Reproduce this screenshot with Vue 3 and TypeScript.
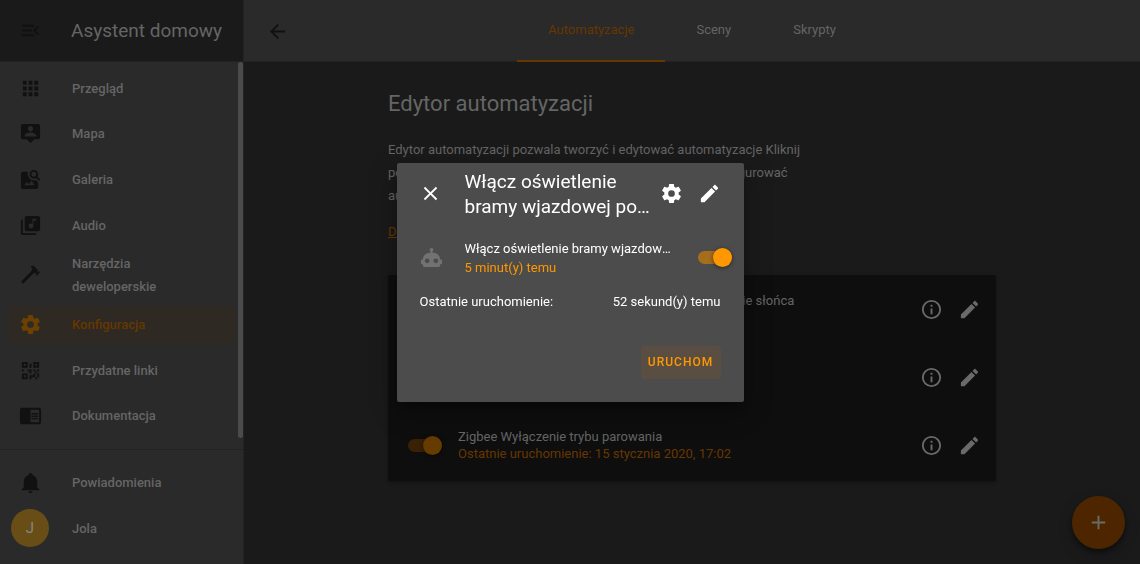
<script setup lang="ts">
interface NavItem {
  label: string
  icon: string
  active?: boolean
}
interface Automation {
  id: string
  name: string
  last: string
}

const icons = {
  menuOpen: 'M21,15.61L19.59,17L14.58,12L19.59,7L21,8.39L17.44,12L21,15.61M3,6H16V8H3V6M3,13V11H13V13H3M3,18V16H16V18H3Z',
  apps: 'M16,20H20V16H16M16,14H20V10H16M10,8H14V4H10M16,8H20V4H16M10,14H14V10H10M4,14H8V10H4M4,20H8V16H4M10,20H14V16H10M4,8H8V4H4V8Z',
  tooltipAccount: 'M20,2H4A2,2 0 0,0 2,4V16A2,2 0 0,0 4,18H8L12,22L16,18H20A2,2 0 0,0 22,16V4A2,2 0 0,0 20,2M12,4.3C13.5,4.3 14.7,5.5 14.7,7C14.7,8.5 13.5,9.7 12,9.7C10.5,9.7 9.3,8.5 9.3,7C9.3,5.5 10.5,4.3 12,4.3M18,15H6V14.1C6,12.1 10,11 12,11C14,11 18,12.1 18,14.1V15Z',
  imageSearch: 'M15.5,9C16.2,9 16.79,8.76 17.27,8.27C17.76,7.79 18,7.2 18,6.5C18,5.83 17.76,5.23 17.27,4.73C16.79,4.23 16.2,4 15.5,4C14.83,4 14.23,4.23 13.73,4.73C13.23,5.23 13,5.83 13,6.5C13,7.2 13.23,7.79 13.73,8.27C14.23,8.76 14.83,9 15.5,9M19.31,8.91L22.41,12L21,13.41L17.86,10.31C17.08,10.78 16.28,11 15.47,11C14.22,11 13.16,10.58 12.3,9.7C11.45,8.83 11,7.77 11,6.5C11,5.27 11.45,4.2 12.33,3.33C13.2,2.45 14.27,2 15.5,2C16.77,2 17.83,2.45 18.7,3.33C19.58,4.2 20,5.27 20,6.5C20,7.33 19.78,8.13 19.31,8.91M16.5,18H5.5L8.25,14.5L10.22,16.83L12.94,13.31L16.5,18M18,13L20,15V20C20,20.55 19.81,21 19.41,21.4C19,21.79 18.53,22 18,22H4C3.45,22 3,21.79 2.6,21.4C2.21,21 2,20.55 2,20V6C2,5.47 2.21,5 2.6,4.59C3,4.19 3.45,4 4,4H9.5C9.2,4.64 9.03,5.31 9,6C8.94,7.86 9.61,9.46 11,10.87C12.24,12.11 13.74,12.82 15.5,13C16.36,13.05 17.19,12.9 18,12.5V13Z',
  music: 'M4,6H2V20A2,2 0 0,0 4,22H18V20H4M18,7H15V12.5A2.5,2.5 0 0,1 12.5,15A2.5,2.5 0 0,1 10,12.5A2.5,2.5 0 0,1 12.5,10C13.07,10 13.58,10.19 14,10.5V5H18M20,2H8A2,2 0 0,0 6,4V16A2,2 0 0,0 8,18H20A2,2 0 0,0 22,16V4A2,2 0 0,0 20,2Z',
  hammer: 'M2,19.63L13.43,8.2L12.72,7.5L14.14,6.07L12,3.89C13.2,2.7 15.09,2.7 16.27,3.89L19.87,7.5L18.45,8.91H21.29L22,9.62L18.45,13.21L17.74,12.5V9.62L16.27,11.04L15.56,10.33L4.13,21.76L2,19.63Z',
  cog: 'M12,15.5A3.5,3.5 0 0,1 8.5,12A3.5,3.5 0 0,1 12,8.5A3.5,3.5 0 0,1 15.5,12A3.5,3.5 0 0,1 12,15.5M19.43,12.97C19.47,12.65 19.5,12.33 19.5,12C19.5,11.67 19.47,11.34 19.43,11L21.54,9.37C21.73,9.22 21.78,8.95 21.66,8.73L19.66,5.27C19.54,5.05 19.27,4.96 19.05,5.05L16.56,6.05C16.04,5.66 15.5,5.32 14.87,5.07L14.5,2.42C14.46,2.18 14.25,2 14,2H10C9.75,2 9.54,2.18 9.5,2.42L9.13,5.07C8.5,5.32 7.96,5.66 7.44,6.05L4.95,5.05C4.73,4.96 4.46,5.05 4.34,5.27L2.34,8.73C2.21,8.95 2.27,9.22 2.46,9.37L4.57,11C4.53,11.34 4.5,11.67 4.5,12C4.5,12.33 4.53,12.65 4.57,12.97L2.46,14.63C2.27,14.78 2.21,15.05 2.34,15.27L4.34,18.73C4.46,18.95 4.73,19.03 4.95,18.95L7.44,17.94C7.96,18.34 8.5,18.68 9.13,18.93L9.5,21.58C9.54,21.82 9.75,22 10,22H14C14.25,22 14.46,21.82 14.5,21.58L14.87,18.93C15.5,18.67 16.04,18.34 16.56,17.94L19.05,18.95C19.27,19.03 19.54,18.95 19.66,18.73L21.66,15.27C21.78,15.05 21.73,14.78 21.54,14.63L19.43,12.97Z',
  qrcode: 'M3,11H5V13H3V11M11,5H13V9H11V5M9,11H13V15H11V13H9V11M15,11H17V13H19V11H21V13H19V15H21V19H19V21H17V19H13V21H11V17H15V15H17V13H15V11M19,19V15H17V19H19M15,3H21V9H15V3M17,5V7H19V5H17M3,3H9V9H3V3M5,5V7H7V5H5M3,15H9V21H3V15M5,17V19H7V17H5Z',
  reader: 'M13,12H20V13.5H13M13,9.5H20V11H13M13,14.5H20V16H13M21,4H3A2,2 0 0,0 1,6V19A2,2 0 0,0 3,21H21A2,2 0 0,0 23,19V6A2,2 0 0,0 21,4M21,19H12V6H21',
  bell: 'M21,19V20H3V19L5,17V11C5,7.9 7.03,5.17 10,4.29C10,4.19 10,4.1 10,4A2,2 0 0,1 12,2A2,2 0 0,1 14,4C14,4.1 14,4.19 14,4.29C16.97,5.17 19,7.9 19,11V17L21,19M14,21A2,2 0 0,1 12,23A2,2 0 0,1 10,21',
  arrowLeft: 'M20,11V13H8L13.5,18.5L12.08,19.92L4.16,12L12.08,4.08L13.5,5.5L8,11H20Z',
  info: 'M11,9H13V7H11M12,20C7.59,20 4,16.41 4,12C4,7.59 7.59,4 12,4C16.41,4 20,7.59 20,12C20,16.41 16.41,20 12,20M12,2A10,10 0 0,0 2,12A10,10 0 0,0 12,22A10,10 0 0,0 22,12A10,10 0 0,0 12,2M11,17H13V11H11V17Z',
  pencil: 'M20.71,7.04C21.1,6.65 21.1,6 20.71,5.63L18.37,3.29C18,2.9 17.35,2.9 16.96,3.29L15.12,5.12L18.87,8.87M3,17.25V21H6.75L17.81,9.93L14.06,6.18L3,17.25Z',
  close: 'M19,6.41L17.59,5L12,10.59L6.41,5L5,6.41L10.59,12L5,17.59L6.41,19L12,13.41L17.59,19L19,17.59L13.41,12L19,6.41Z',
  plus: 'M19,13H13V19H11V13H5V11H11V5H13V11H19V13Z',
  robot: 'M12,2A2,2 0 0,1 14,4C14,4.74 13.6,5.39 13,5.73V7H14A7,7 0 0,1 21,14H22A1,1 0 0,1 23,15V18A1,1 0 0,1 22,19H21V20A2,2 0 0,1 19,22H5A2,2 0 0,1 3,20V19H2A1,1 0 0,1 1,18V15A1,1 0 0,1 2,14H3A7,7 0 0,1 10,7H11V5.73C10.4,5.39 10,4.74 10,4A2,2 0 0,1 12,2M7.5,13A2.5,2.5 0 0,0 5,15.5A2.5,2.5 0 0,0 7.5,18A2.5,2.5 0 0,0 10,15.5A2.5,2.5 0 0,0 7.5,13M16.5,13A2.5,2.5 0 0,0 14,15.5A2.5,2.5 0 0,0 16.5,18A2.5,2.5 0 0,0 19,15.5A2.5,2.5 0 0,0 16.5,13Z',
}

const navItems: NavItem[] = [
  { label: 'Przegląd', icon: icons.apps },
  { label: 'Mapa', icon: icons.tooltipAccount },
  { label: 'Galeria', icon: icons.imageSearch },
  { label: 'Audio', icon: icons.music },
  { label: 'Narzędzia deweloperskie', icon: icons.hammer },
  { label: 'Konfiguracja', icon: icons.cog, active: true },
  { label: 'Przydatne linki', icon: icons.qrcode },
  { label: 'Dokumentacja', icon: icons.reader },
]

const tabs = ['Automatyzacje', 'Sceny', 'Skrypty']
const dialogName = 'Włącz oświetlenie bramy wjazdowej po zachodzie słońca'

const automations: Automation[] = [
  { id: 'on', name: 'Włącza oświetlenie bramy wjazdowej po zachodzie słońca', last: 'Ostatnie uruchomienie: 52 sekund(y) temu' },
  { id: 'off', name: 'Wyłącz oświetlenie bramy wjazdowej', last: 'Ostatnie uruchomienie: nigdy' },
  { id: 'zigbee', name: 'Zigbee Wyłączenie trybu parowania', last: 'Ostatnie uruchomienie: 15 stycznia 2020, 17:02' },
]
</script>

<template>
  <div class="app">
    <aside class="sidebar">
      <header class="brand">
        <button class="icon-btn" aria-label="Zwiń menu">
          <svg class="icon" viewBox="0 0 24 24"><path :d="icons.menuOpen" /></svg>
        </button>
        <span class="brand-name">Asystent domowy</span>
      </header>
      <div class="nav-area">
        <nav class="nav">
          <a v-for="item in navItems" :key="item.label" href="#" class="nav-item" :class="{ active: item.active }">
            <svg class="icon" viewBox="0 0 24 24"><path fill-rule="evenodd" :d="item.icon" /></svg>
            <span>{{ item.label }}</span>
          </a>
        </nav>
        <div class="scroll-thumb"></div>
      </div>
      <div class="bottom">
        <a href="#" class="nav-item">
          <svg class="icon" viewBox="0 0 24 24"><path :d="icons.bell" /></svg>
          <span>Powiadomienia</span>
        </a>
        <a href="#" class="nav-item profile">
          <span class="avatar">J</span>
          <span>Jola</span>
        </a>
      </div>
    </aside>

    <main class="main">
      <header class="topbar">
        <button class="icon-btn back" aria-label="Wstecz">
          <svg class="icon" viewBox="0 0 24 24"><path :d="icons.arrowLeft" /></svg>
        </button>
        <nav class="tabs">
          <a v-for="(tab, i) in tabs" :key="tab" href="#" class="tab" :class="{ active: i === 0 }">{{ tab }}</a>
        </nav>
      </header>

      <section class="content">
        <h1>Edytor automatyzacji</h1>
        <p class="intro">
          Edytor automatyzacji pozwala tworzyć i edytować automatyzacje Kliknij
          poniższy link, aby przeczytać instrukcję, jak poprawnie skonfigurować
          automatyzacje w Home Assistant.
        </p>
        <a href="#" class="learn">Dowiedz się więcej o automatyzacji</a>
        <div class="card">
          <div v-for="a in automations" :key="a.id" class="row">
            <input :id="`auto-${a.id}`" type="checkbox" class="switch" checked />
            <label class="row-text" :for="`auto-${a.id}`">
              <span>{{ a.name }}</span>
              <span class="last">{{ a.last }}</span>
            </label>
            <button class="icon-btn" aria-label="Informacje">
              <svg class="icon" viewBox="0 0 24 24"><path :d="icons.info" /></svg>
            </button>
            <button class="icon-btn" aria-label="Edytuj">
              <svg class="icon" viewBox="0 0 24 24"><path :d="icons.pencil" /></svg>
            </button>
          </div>
        </div>
      </section>
      <button class="fab" aria-label="Dodaj automatyzację">
        <svg class="icon" viewBox="0 0 24 24"><path :d="icons.plus" /></svg>
      </button>
    </main>

    <div class="overlay">
      <section class="dialog" role="dialog" aria-modal="true" aria-labelledby="dialog-title">
        <header class="dialog-head">
          <button class="icon-btn" aria-label="Zamknij">
            <svg class="icon" viewBox="0 0 24 24"><path :d="icons.close" /></svg>
          </button>
          <h2 id="dialog-title">{{ dialogName }}</h2>
          <button class="icon-btn" aria-label="Ustawienia">
            <svg class="icon" viewBox="0 0 24 24"><path :d="icons.cog" /></svg>
          </button>
          <button class="icon-btn" aria-label="Edytuj">
            <svg class="icon" viewBox="0 0 24 24"><path :d="icons.pencil" /></svg>
          </button>
        </header>
        <div class="state">
          <svg class="icon robot" viewBox="0 0 24 24"><path :d="icons.robot" /></svg>
          <label class="state-text" for="dialog-switch">
            <span class="state-name">{{ dialogName }}</span>
            <span class="ago">5 minut(y) temu</span>
          </label>
          <input id="dialog-switch" type="checkbox" class="switch" checked />
        </div>
        <div class="attr">
          <span>Ostatnie uruchomienie:</span>
          <span>52 sekund(y) temu</span>
        </div>
        <div class="actions">
          <button class="run">Uruchom</button>
        </div>
      </section>
    </div>
  </div>
</template>

<style>
body {
  margin: 0;
  background: #1a1a1a;
}
</style>

<style scoped>
.app {
  --accent: #663700;
  --text: #656565;
  display: flex;
  min-height: 100vh;
  font-family: Roboto, "Noto Sans", sans-serif;
  font-size: 13px;
  color: var(--text);
}
.app * {
  box-sizing: border-box;
}
a {
  color: inherit;
  text-decoration: none;
}
button {
  font: inherit;
  color: inherit;
  border: 0;
  padding: 0;
  background: none;
}
.icon {
  display: block;
  width: 23px;
  height: 23px;
  fill: currentColor;
  flex: none;
}
.icon-btn {
  display: flex;
  align-items: center;
  justify-content: center;
  width: 38px;
  height: 38px;
  flex: none;
}

.sidebar {
  display: flex;
  flex-direction: column;
  width: 244px;
  flex: none;
  background: #2a2a2a;
  border-right: 1px solid #232323;
}
.brand {
  display: flex;
  align-items: center;
  gap: 22px;
  height: 62px;
  padding-left: 11px;
  background: #1a1a1a;
  border-bottom: 1px solid #222;
  font-size: 19px;
}
.brand .icon,
.back .icon,
.nav-item .icon {
  color: #111;
}
.brand-name {
  white-space: nowrap;
}
.nav-area {
  position: relative;
  flex: 1;
  display: flex;
}
.nav {
  flex: 1;
  display: flex;
  flex-direction: column;
  justify-content: space-between;
  padding: 7px 7px 14px 8px;
}
.scroll-thumb {
  position: absolute;
  top: 0;
  right: 0;
  bottom: 11px;
  width: 5px;
  border-radius: 3px;
  background: #4b4b4b;
}
.nav-item {
  display: flex;
  align-items: center;
  gap: 30px;
  min-height: 38px;
  padding: 0 60px 0 11px;
  border-radius: 4px;
  font-weight: 500;
  line-height: 23px;
}
.nav-item.active {
  background: #2f2923;
  color: var(--accent);
}
.nav-item.active .icon {
  color: #6b4000;
}
.bottom {
  display: flex;
  flex-direction: column;
  gap: 8px;
  padding: 13px 8px 17px;
  border-top: 1px solid #222;
}
.profile {
  padding-left: 3px;
  gap: 23px;
}
.avatar {
  display: flex;
  align-items: center;
  justify-content: center;
  width: 38px;
  height: 38px;
  border-radius: 50%;
  background: #684e16;
  color: #858585;
  font-size: 15px;
  font-weight: 400;
}

.main {
  flex: 1;
  min-width: 0;
  background: #1a1a1a;
}
.topbar {
  display: grid;
  grid-template-columns: 1fr auto 1fr;
  align-items: center;
  height: 62px;
  padding: 0 14px;
  background: #2a2a2a;
  border-bottom: 1px solid #222;
}
.tabs {
  display: flex;
  height: 62px;
}
.tab {
  display: flex;
  align-items: center;
  padding: 0 31px 2px;
  border-bottom: 2px solid transparent;
}
.tab.active {
  color: var(--accent);
  border-color: var(--accent);
}
.content {
  max-width: 608px;
  margin: 0 auto;
  padding-top: 27px;
}
h1 {
  margin: 0;
  font-size: 22px;
  font-weight: 400;
  line-height: 30px;
}
.intro {
  width: 426px;
  margin: 19px 0 13px;
  line-height: 23px;
}
.learn {
  display: inline-block;
  line-height: 23px;
  color: var(--accent);
  text-decoration: underline;
}
.card {
  display: flex;
  flex-direction: column;
  margin-top: 32px;
  padding-bottom: 2px;
  background: #0e0e0e;
  border-radius: 2px;
  box-shadow: 0 2px 2px rgba(0, 0, 0, 0.14), 0 1px 5px rgba(0, 0, 0, 0.12);
}
.row {
  display: flex;
  align-items: center;
  min-height: 68px;
  padding: 0 8px 0 20px;
}
.row .icon-btn {
  color: #6a6a6a;
}
.row-text {
  flex: 1;
  display: flex;
  flex-direction: column;
  margin-left: 16px;
  line-height: 17px;
}
.last {
  color: var(--accent);
}
.switch {
  appearance: none;
  position: relative;
  flex: none;
  width: 34px;
  height: 19px;
  margin: 0;
}
.switch::before {
  content: "";
  position: absolute;
  top: 3px;
  left: 0;
  width: 34px;
  height: 13px;
  border-radius: 7px;
  background: #3a2106;
}
.switch::after {
  content: "";
  position: absolute;
  top: 0;
  right: 0;
  width: 19px;
  height: 19px;
  border-radius: 50%;
  background: #663b00;
  box-shadow: 0 1px 4px rgba(0, 0, 0, 0.5);
}
.fab {
  position: fixed;
  right: 15px;
  bottom: 15px;
  display: flex;
  align-items: center;
  justify-content: center;
  width: 53px;
  height: 53px;
  border-radius: 50%;
  background: #4d2600;
  color: #6a6a6a;
  box-shadow: 0 3px 5px rgba(0, 0, 0, 0.4), 0 5px 14px rgba(0, 0, 0, 0.25);
}

.overlay {
  position: fixed;
  inset: 0;
  display: flex;
  align-items: center;
  justify-content: center;
}
.dialog {
  width: 347px;
  background: #4c4c4c;
  border-radius: 2px;
  color: #fff;
  box-shadow: 0 15px 23px 2px rgba(0, 0, 0, 0.14), 0 6px 29px 5px rgba(0, 0, 0, 0.12), 0 8px 10px -5px rgba(0, 0, 0, 0.4);
}
.dialog-head {
  display: flex;
  align-items: center;
  min-height: 62px;
  padding: 0 15px;
}
h2 {
  flex: 1;
  display: -webkit-box;
  -webkit-box-orient: vertical;
  -webkit-line-clamp: 2;
  overflow: hidden;
  margin: 0 2px 0 15px;
  font-size: 19px;
  font-weight: 400;
  line-height: 25px;
}
.state {
  display: flex;
  align-items: center;
  margin-top: 14px;
  padding: 0 12px 0 23px;
  line-height: 19px;
}
.robot {
  color: #727272;
}
.state-text {
  flex: 1;
  min-width: 0;
  display: flex;
  flex-direction: column;
  margin: 0 20px 0 22px;
}
.state-name {
  overflow: hidden;
  white-space: nowrap;
  text-overflow: ellipsis;
}
.ago {
  color: #ff9800;
}
.dialog .switch::before {
  background: #a66d1c;
}
.dialog .switch::after {
  background: #ff9800;
}
.attr {
  display: flex;
  justify-content: space-between;
  margin-top: 15px;
  padding: 0 23px;
  line-height: 19px;
}
.actions {
  display: flex;
  justify-content: flex-end;
  padding: 35px 23px 23px;
}
.run {
  min-width: 80px;
  height: 33px;
  border-radius: 4px;
  background: #5a4e42;
  color: #ff9800;
  font-size: 12px;
  font-weight: 500;
  letter-spacing: 1px;
  text-transform: uppercase;
}
</style>
